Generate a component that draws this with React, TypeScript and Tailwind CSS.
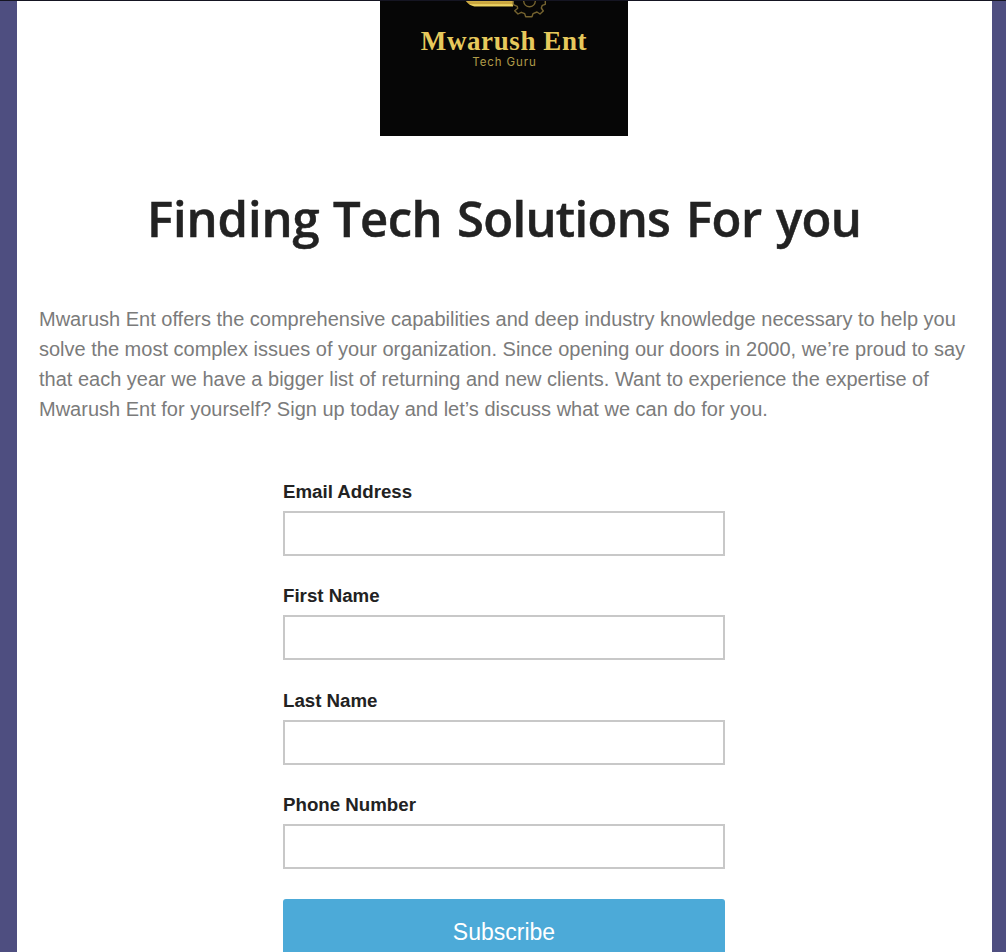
const words = [
  { text: 'Finding', style: 'w-[186px] tracking-[-0.1px]' },
  { text: 'Tech', style: 'w-[124px] tracking-[-0.6px]' },
  { text: 'Solutions', style: 'w-[229px] tracking-[-0.7px]' },
  { text: 'For', style: 'w-[90px] tracking-[-0.5px]' },
  { text: 'you', style: 'w-[85px] tracking-[-0.7px]' },
];

const fields = [
  { label: 'Email Address', name: 'email', gap: 'mb-[27px]' },
  { label: 'First Name', name: 'first', gap: 'mb-[28px]' },
  { label: 'Last Name', name: 'last', gap: 'mb-[27px]' },
  { label: 'Phone Number', name: 'phone', gap: 'mb-[30px]' },
];

const bodyLines = [
  'Mwarush Ent offers the comprehensive capabilities and deep industry knowledge necessary to help you',
  'solve the most complex issues of your organization. Since opening our doors in 2000, we’re proud to say',
  'that each year we have a bigger list of returning and new clients. Want to experience the expertise of',
  'Mwarush Ent for yourself? Sign up today and let’s discuss what we can do for you.',
];

function Logo() {
  return (
    <div className="ml-[363px] flex h-[135px] w-[248px] flex-col items-center bg-[#060606]">
      <svg className="h-[25px] w-full shrink-0" viewBox="0 1 248 25" fill="none">
        <defs>
          <linearGradient id="gold" x1="0" y1="0" x2="0" y2="7" gradientUnits="userSpaceOnUse">
            <stop offset="0" stopColor="#d9b84c" />
            <stop offset=".48" stopColor="#c5a03a" />
            <stop offset=".7" stopColor="#f2d968" />
            <stop offset="1" stopColor="#dfc451" />
          </linearGradient>
        </defs>
        <path d="M85 0H133V6.5H96C91 6.5 88 3.7 85 0Z" fill="url(#gold)" />
        <path
          d="M133.3 1V4.7L137.3 6.3L137.7 8.3L134.7 10.7L138 14L141.3 12.3L144.7 13.7L145.7 16.7H152L153 13.7L157 12L160 14L163.3 11L161.3 8L162.3 5.3L165.3 4.3V1M143.6 0C143.6 9 155.4 9 155.4 0"
          stroke="#75632f"
          strokeWidth="1.4"
          strokeLinejoin="round"
        />
      </svg>
      <div className="h-[30px] whitespace-nowrap font-['Liberation_Serif',serif] text-[27px] leading-[30px] font-bold tracking-[0.6px] text-[#e6c95c]">
        Mwarush Ent
      </div>
      <div className="h-[14px] whitespace-nowrap pl-px font-['Inter',sans-serif] text-[11.5px] leading-[13px] tracking-[0.9px] text-[#b19c49]">
        Tech Guru
      </div>
    </div>
  );
}

function Field({ label, name, gap }: { label: string; name: string; gap: string }) {
  return (
    <div className={gap}>
      <label htmlFor={name} className="block h-[32px] pt-[2px] text-[18.7px] leading-[22px] font-bold text-[#222]">
        {label}
      </label>
      <input id={name} name={name} className="block h-[45px] w-full border-2 border-[#c8c8c8] bg-white px-3" />
    </div>
  );
}

export default function App() {
  return (
    <div className="h-[952px] overflow-hidden border-t border-[#151522] bg-[#4e4e80] pr-[14px] pl-[17px] font-['Liberation_Sans',sans-serif]">
      <main className="h-full bg-white">
        <Logo />
        <h1 className="mt-[47px] ml-[130px] flex h-[70px] text-[49px] leading-[70px] font-semibold whitespace-nowrap text-[#222] font-['Open_Sans',sans-serif] [-webkit-text-stroke:0.5px_#222]">
          {words.map((word) => (
            <span key={word.text} className={word.style}>{word.text}</span>
          ))}
        </h1>
        <p className="mt-[51px] ml-[22px] text-[20px] leading-[30px] whitespace-nowrap text-[#7b7b7b]">
          {bodyLines.map((line) => (
            <span key={line} className="block">{line}</span>
          ))}
        </p>
        <form className="mt-[55px] ml-[266px] w-[442px]">
          {fields.map((field) => (
            <Field key={field.name} {...field} />
          ))}
          <button type="button" className="block h-[66px] w-full rounded-[3px] bg-[#4caad8] text-[23px] leading-[66px] text-white">
            Subscribe
          </button>
        </form>
      </main>
    </div>
  );
}
